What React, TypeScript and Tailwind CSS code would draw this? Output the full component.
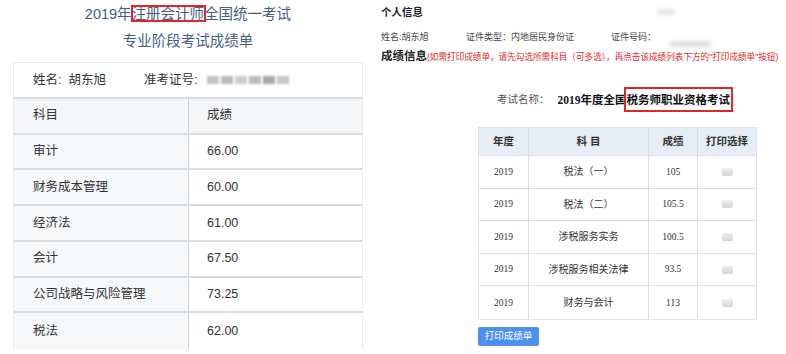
// App.tsx — two score report screenshots side by side

const sans = { fontFamily: '"Liberation Sans", "Noto Sans CJK SC", sans-serif' };
const serif = { fontFamily: '"Liberation Serif", "Noto Sans CJK SC", serif' };

const cpaScores = [
  { subject: '审计', score: '66.00' },
  { subject: '财务成本管理', score: '60.00' },
  { subject: '经济法', score: '61.00' },
  { subject: '会计', score: '67.50' },
  { subject: '公司战略与风险管理', score: '73.25' },
  { subject: '税法', score: '62.00' },
];

const taxScores = [
  { year: '2019', subject: '税法（一）', score: '105' },
  { year: '2019', subject: '税法（二）', score: '105.5' },
  { year: '2019', subject: '涉税服务实务', score: '100.5' },
  { year: '2019', subject: '涉税服务相关法律', score: '93.5' },
  { year: '2019', subject: '财务与会计', score: '113' },
];

// red highlight box drawn over the text
const Marked = ({ children, box, lead }: { children: React.ReactNode; box: string; lead: string }) => (
  <span className={`relative inline-block ${lead}`}>
    {children}
    <span className={`absolute border-2 border-[#e0262b] pointer-events-none ${box}`}></span>
  </span>
);

const CpaPanel = () => (
  <div className="w-[370px] shrink-0 pl-[13px]" style={sans}>
    <div className="w-[350px] flex flex-col items-center text-[14.5px] text-[#46607f]">
      <div className="mt-[4px] h-[20px] leading-[20px]">
        2019年
        <Marked lead="leading-[20px]" box="-left-[1px] -right-[2px] top-[1px] bottom-[2px]">
          注册会计师
        </Marked>
        全国统一考试
      </div>
      <div className="mt-[7px] h-[20px] leading-[20px]">专业阶段考试成绩单</div>
    </div>

    <div className="mt-[11px] w-[350px] border-x border-t border-[#ececec] text-[12.5px] text-[#333]">
      <div className="h-[36px] flex items-center pl-[19px] border-b-2 border-[#dadde1] bg-white">
        <span>姓名:&nbsp; 胡东旭</span>
        <span className="ml-[38px]">准考证号:</span>
        <div className="ml-[10px] flex gap-[2px] blur-[1px]">
          <div className="w-[12px] h-[8px] bg-[#c4c4c4]"></div>
          <div className="w-[12px] h-[8px] bg-[#b8b8b8]"></div>
          <div className="w-[12px] h-[8px] bg-[#cdcdcd]"></div>
          <div className="w-[12px] h-[8px] bg-[#bdbdbd]"></div>
          <div className="w-[12px] h-[8px] bg-[#a9a9a9]"></div>
          <div className="w-[12px] h-[8px] bg-[#c6c6c6]"></div>
        </div>
      </div>
      <div className="h-[35.5px] flex border-b-2 border-[#dadde1] bg-[#f4f6f8]">
        <div className="w-[175px] flex items-center pl-[19px] border-r border-[#cfd2d6]">科目</div>
        <div className="flex-1 flex items-center pl-[18px]">成绩</div>
      </div>
      {cpaScores.map((row, i) => (
        <div
          key={row.subject}
          className={`h-[35.8px] flex ${i < cpaScores.length - 1 ? 'border-b-2 border-[#dadde1]' : ''}`}
        >
          <div className="w-[175px] flex items-center pl-[19px] bg-[#f6f8fa] border-r border-[#cfd2d6]">
            {row.subject}
          </div>
          <div className="flex-1 flex items-center pl-[18px] bg-white">{row.score}</div>
        </div>
      ))}
    </div>
  </div>
);

const TaxPanel = () => (
  <div className="flex-1 relative" style={sans}>
    <div className="pl-[11px] text-[#222]">
      <div className="mt-[5px] h-[14px] leading-[14px] text-[10.5px] font-bold">个人信息</div>
      <div className="mt-[12px] h-[12px] leading-[12px] flex text-[9px] text-[#444]">
        <span className="w-[85px]">姓名:胡东旭</span>
        <span className="w-[145px]">证件类型：内地居民身份证</span>
        <span>证件号码：</span>
      </div>
      <div className="mt-[6px] h-[14px] leading-[14px] flex items-baseline whitespace-nowrap">
        <span className="text-[11.5px] font-bold">成绩信息</span>
        <span className="text-[8.6px] text-[#e2282d]">
          (如需打印成绩单，请先勾选所需科目（可多选），再点击该成绩列表下方的"打印成绩单"按钮)
        </span>
      </div>
    </div>

    <div className="mt-[29px] ml-[127px] h-[16px] flex items-center whitespace-nowrap">
      <span className="text-[10.5px] text-[#555]">考试名称：</span>
      <span className="ml-[8px] text-[11.5px] font-bold text-[#111] leading-[16px]" style={serif}>
        2019年度全国
        <Marked lead="leading-[16px]" box="-left-[3px] -right-[3px] -top-[5px] -bottom-[4px]">
          税务师职业资格考试
        </Marked>
      </span>
    </div>

    <div className="mt-[19px] ml-[108px] w-[279px] border border-[#e0e3e7] text-[#333]">
      <div className="h-[28px] flex bg-[#e7edf4] text-[10.5px] font-bold border-b border-[#dde1e6]">
        <div className="w-[50px] flex items-center justify-center border-r border-[#d9dde2]">年度</div>
        <div className="w-[120px] flex items-center justify-center border-r border-[#d9dde2]">科 目</div>
        <div className="w-[49px] flex items-center justify-center border-r border-[#d9dde2]">成绩</div>
        <div className="flex-1 flex items-center justify-center">打印选择</div>
      </div>
      {taxScores.map((row, i) => (
        <div
          key={row.subject}
          className={`h-[32.6px] flex ${i < taxScores.length - 1 ? 'border-b border-[#dcdfe3]' : ''}`}
        >
          <div className="w-[50px] flex items-center justify-center border-r border-[#dcdfe3] text-[9.5px]" style={serif}>
            {row.year}
          </div>
          <div className="w-[120px] flex items-center justify-center border-r border-[#dcdfe3] text-[10px]">
            {row.subject}
          </div>
          <div className="w-[49px] flex items-center justify-center border-r border-[#dcdfe3] text-[9.5px]" style={serif}>
            {row.score}
          </div>
          <div className="flex-1 flex items-center justify-center">
            <div className="w-[11px] h-[8px] rounded-[2px] bg-gradient-to-b from-[#eeeeee] to-[#d4d4d4]"></div>
          </div>
        </div>
      ))}
    </div>

    <button className="mt-[7px] ml-[108px] w-[61px] h-[19px] rounded-[2px] bg-[#4f8ff0] text-white text-[9.5px] flex items-center justify-center">
      打印成绩单
    </button>

    {/* faint smudges where the ID number was blurred out */}
    <div className="absolute left-[288px] top-[10px] w-[16px] h-[4px] bg-[#d6d6d6] blur-[2px]"></div>
    <div className="absolute left-[300px] top-[42px] w-[40px] h-[4px] bg-[#d0d0d0] blur-[2px]"></div>
  </div>
);

export default function App() {
  return (
    <div className="w-[786px] h-[354px] flex bg-white overflow-hidden">
      <CpaPanel />
      <TaxPanel />
    </div>
  );
}
